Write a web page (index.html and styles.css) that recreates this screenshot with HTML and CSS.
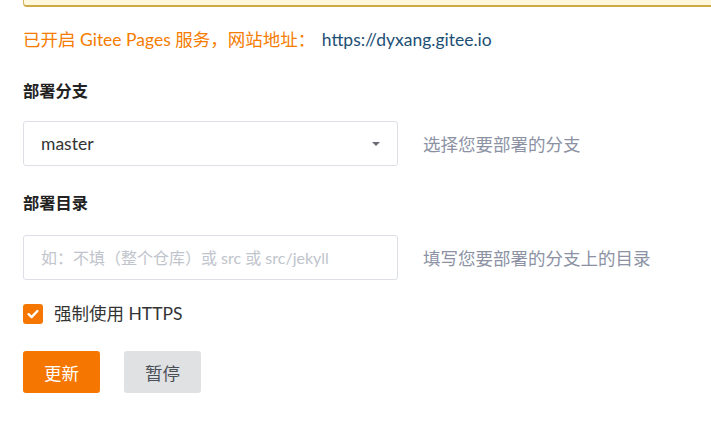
FILE: index.html
```html
<!DOCTYPE html>
<html lang="zh-CN">
<head>
<meta charset="utf-8">
<title>Gitee Pages</title>
<link rel="stylesheet" href="styles.css">
</head>
<body>
<div class="page">
  <div class="warning-box"></div>
  <p class="status">已开启 Gitee Pages 服务，网站地址： <a class="site-link" href="#">https://dyxang.gitee.io</a></p>

  <div class="field">
    <div class="field-label">部署分支</div>
    <div class="field-row">
      <div class="select">
        <span class="select-value">master</span>
        <span class="caret"></span>
      </div>
      <span class="help">选择您要部署的分支</span>
    </div>
  </div>

  <div class="field field-dir">
    <div class="field-label">部署目录</div>
    <div class="field-row">
      <input class="text-input" type="text" placeholder="如：不填（整个仓库）或 src 或 src/jekyll">
      <span class="help">填写您要部署的分支上的目录</span>
    </div>
  </div>

  <label class="check">
    <span class="check-box">
      <svg width="14" height="14" viewBox="0 0 14 14"><path d="M2.6 7.2 L5.6 10.1 L11.4 4" fill="none" stroke="#fff" stroke-width="2.4" stroke-linecap="round" stroke-linejoin="round"/></svg>
    </span>
    <span class="check-text">强制使用 HTTPS</span>
  </label>

  <div class="actions">
    <button class="btn btn-primary">更新</button>
    <button class="btn btn-default">暂停</button>
  </div>
</div>
</body>
</html>
```

FILE: styles.css
```css
html, body {
  margin: 0;
  padding: 0;
  background: #fff;
}
body {
  font-family: Lato, "Noto Sans CJK SC", "Open Sans", sans-serif;
  font-size: 17.5px;
  color: #333;
}
.page {
  padding-left: 23px;
  overflow: hidden;
  height: 427px;
  display: flex;
  flex-direction: column;
  align-items: flex-start;
}
.warning-box {
  align-self: stretch;
  margin-right: -20px;
  height: 5px;
  background: #fff8dc;
  border: 1px solid #d9b65e;
  border-top: none;
  border-bottom: 2px solid #cfa944;
  border-bottom-left-radius: 4px;
}
.status {
  margin: 21px 0 0;
  line-height: 24px;
  color: #f57c00;
}
.site-link {
  color: #1d4f74;
  text-decoration: none;
  margin-left: 2px;
}
.field {
  margin-top: 29px;
  display: flex;
  flex-direction: column;
  align-items: flex-start;
}
.field-dir {
  margin-top: 27px;
}
.field-label {
  font-size: 16.25px;
  font-weight: bold;
  line-height: 20px;
  color: #222;
}
.field-row {
  margin-top: 20px;
  display: flex;
  align-items: center;
  gap: 25px;
}
.field-dir .field-row {
  margin-top: 22px;
}
.select, .text-input {
  box-sizing: border-box;
  width: 375px;
  height: 45px;
  border: 1px solid #dcdfe6;
  border-radius: 3px;
  background: #fff;
  padding: 0 17px;
  font: inherit;
}
.select {
  display: flex;
  align-items: center;
  justify-content: space-between;
  color: #333;
}
.caret {
  width: 0;
  height: 0;
  border-left: 4.5px solid transparent;
  border-right: 4.5px solid transparent;
  border-top: 4px solid #6b6b73;
}
.text-input {
  color: #333;
  outline: none;
}
.text-input::placeholder {
  color: #c0c4cc;
  font-size: 16px;
}
.help {
  color: #8c92a4;
}
.check {
  margin-top: 24px;
  display: flex;
  align-items: center;
  gap: 11px;
  line-height: 20px;
}
.check-box {
  width: 20px;
  height: 20px;
  border-radius: 3px;
  background: #f57600;
  display: flex;
  align-items: center;
  justify-content: center;
}
.check-box svg {
  display: block;
}
.check-text {
  color: #333;
}
.actions {
  margin-top: 27px;
  display: flex;
  gap: 24px;
}
.btn {
  width: 77px;
  height: 42px;
  border: none;
  border-radius: 3px;
  font: inherit;
  padding: 0;
  cursor: pointer;
}
.btn-primary {
  background: #f57600;
  color: #fff;
}
.btn-default {
  background: #e0e1e2;
  color: #4a4f58;
}
```
